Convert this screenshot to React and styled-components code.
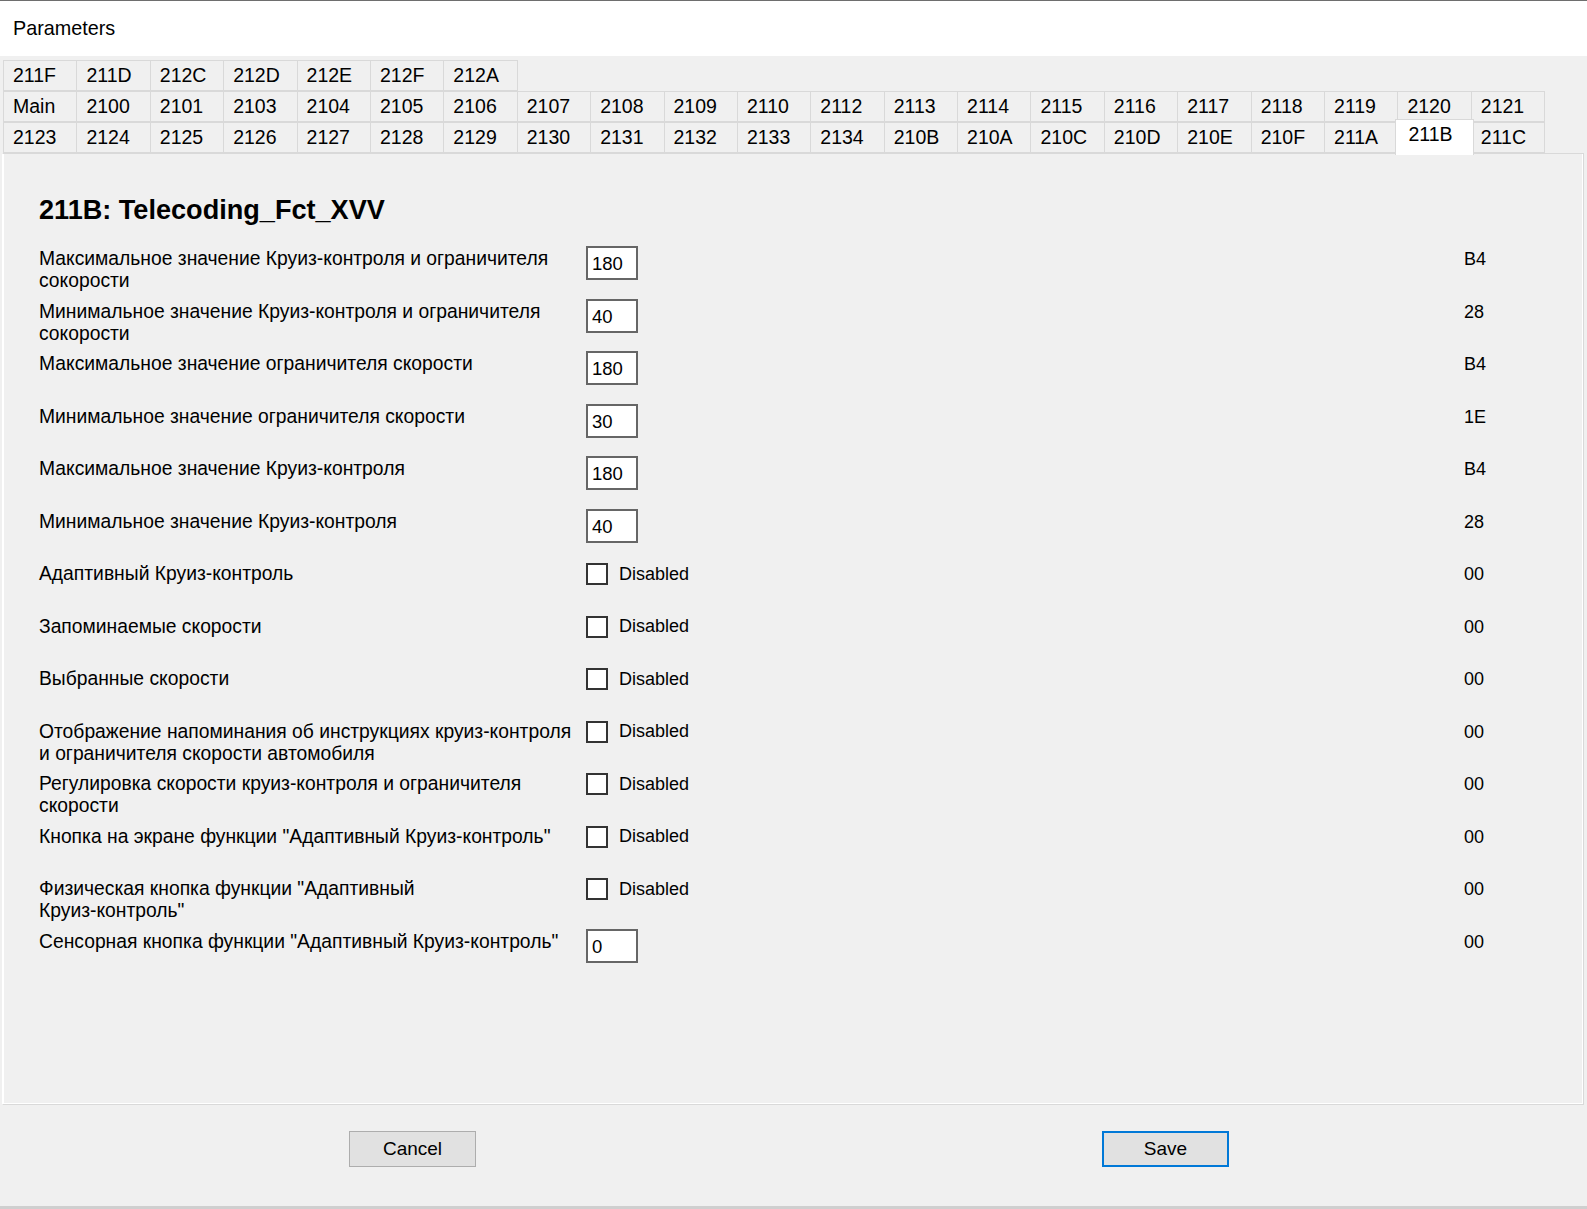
import React from "react";
import styled, { createGlobalStyle } from "styled-components";

const GlobalStyle = createGlobalStyle`
  html, body {
    margin: 0;
    padding: 0;
    background: #f0f0f0;
  }
  body {
    font-family: "Liberation Sans", Arial, sans-serif;
    color: #000;
  }
  * { box-sizing: border-box; }
`;

const Window = styled.div`
  width: 1587px;
  height: 1209px;
  display: flex;
  flex-direction: column;
  background: #f0f0f0;
  border-top: 1px solid #6e6e6e;
  border-bottom: 3px solid #cfcfcf;
`;

const Header = styled.header`
  height: 55px;
  flex: none;
  background: #fff;
  display: flex;
  align-items: center;
  padding-left: 13px;
  font-size: 19.8px;
`;

const TabStrip = styled.nav`
  flex: none;
  padding: 4px 0 0 3px;
  display: flex;
  flex-direction: column;
`;

const TabRow = styled.div`
  display: flex;
  height: 31px;
`;

const Tab = styled.div`
  flex: none;
  width: 74.4px;
  height: 31px;
  margin-right: -1px;
  margin-bottom: -1px;
  border: 1px solid #d9d9d9;
  background: #f0f0f0;
  display: flex;
  align-items: center;
  padding: 0 0 0 9px;
  font-size: 19.5px;
  white-space: nowrap;
  position: relative;

  ${(p) =>
    p.$active &&
    `
    z-index: 2;
    background: #fff;
    height: 36px;
    width: 78.4px;
    margin: -3px -3px -2px -2px;
    padding: 0 0 6px 12px;
    border-bottom: none;
  `}
`;

const Panel = styled.section`
  flex: 1;
  margin: 0 3px 0 2px;
  border: 1px solid #d9d9d9;
  border-left-color: #fff;
  box-shadow: inset 1px 0 #fff, inset -1px -1px #fff;
  padding: 41px 0 0 36px;
`;

const Title = styled.h1`
  margin: 0 0 23px;
  font-size: 27.1px;
  line-height: 30px;
  font-weight: bold;
`;

const ParamGrid = styled.div`
  display: grid;
  grid-template-columns: 547px 878px auto;
  grid-auto-rows: 52.5px;
`;

const Label = styled.div`
  font-size: 19.3px;
  line-height: 22.3px;
  white-space: nowrap;
`;

const Control = styled.div`
  display: flex;
  align-items: flex-start;
`;

const ValueBox = styled.div`
  width: 52px;
  height: 34px;
  margin-top: -2px;
  background: #fff;
  border: 2px solid #666;
  font-size: 18.5px;
  padding: 5px 0 0 4px;
  line-height: 22px;
`;

const CheckRow = styled.label`
  display: flex;
  align-items: center;
  height: 22px;
  gap: 11px;
  font-size: 18px;
`;

const Box = styled.span`
  width: 22px;
  height: 22px;
  background: #fff;
  border: 2px solid #333;
`;

const Hex = styled.div`
  font-size: 18px;
  line-height: 22.3px;
`;

const Footer = styled.footer`
  height: 101px;
  flex: none;
  display: flex;
  align-items: flex-start;
  padding: 26px 0 0 349px;
  gap: 626px;
`;

const Button = styled.button`
  width: 127px;
  height: 36px;
  background: #e1e1e1;
  border: ${(p) => (p.$primary ? "2px solid #0078d7" : "1px solid #adadad")};
  font-family: inherit;
  font-size: 19px;
  color: #000;
  padding: 0;
`;

const tabRows = [
  ["211F", "211D", "212C", "212D", "212E", "212F", "212A"],
  [
    "Main", "2100", "2101", "2103", "2104", "2105", "2106", "2107", "2108", "2109", "2110",
    "2112", "2113", "2114", "2115", "2116", "2117", "2118", "2119", "2120", "2121",
  ],
  [
    "2123", "2124", "2125", "2126", "2127", "2128", "2129", "2130", "2131", "2132", "2133",
    "2134", "210B", "210A", "210C", "210D", "210E", "210F", "211A", "211B", "211C",
  ],
];

const activeTab = "211B";

const params = [
  { label: ["Максимальное значение Круиз-контроля и ограничителя", "сокорости"], value: "180", hex: "B4" },
  { label: ["Минимальное значение Круиз-контроля и ограничителя", "сокорости"], value: "40", hex: "28" },
  { label: ["Максимальное значение ограничителя скорости"], value: "180", hex: "B4" },
  { label: ["Минимальное значение ограничителя скорости"], value: "30", hex: "1E" },
  { label: ["Максимальное значение Круиз-контроля"], value: "180", hex: "B4" },
  { label: ["Минимальное значение Круиз-контроля"], value: "40", hex: "28" },
  { label: ["Адаптивный Круиз-контроль"], check: true, hex: "00" },
  { label: ["Запоминаемые скорости"], check: true, hex: "00" },
  { label: ["Выбранные скорости"], check: true, hex: "00" },
  { label: ["Отображение напоминания об инструкциях круиз-контроля", "и ограничителя скорости автомобиля"], check: true, hex: "00" },
  { label: ["Регулировка скорости круиз-контроля и ограничителя", "скорости"], check: true, hex: "00" },
  { label: ["Кнопка на экране функции \"Адаптивный Круиз-контроль\""], check: true, hex: "00" },
  { label: ["Физическая кнопка функции \"Адаптивный", "Круиз-контроль\""], check: true, hex: "00" },
  { label: ["Сенсорная кнопка функции \"Адаптивный Круиз-контроль\""], value: "0", hex: "00" },
];

export default function App() {
  return (
    <>
      <GlobalStyle />
      <Window>
        <Header>Parameters</Header>
        <TabStrip>
          {tabRows.map((row, i) => (
            <TabRow key={i}>
              {row.map((t) => (
                <Tab key={t} $active={t === activeTab}>
                  {t}
                </Tab>
              ))}
            </TabRow>
          ))}
        </TabStrip>
        <Panel>
          <Title>211B: Telecoding_Fct_XVV</Title>
          <ParamGrid>
            {params.map((p, i) => (
              <React.Fragment key={i}>
                <Label>
                  {p.label.map((line, j) => (
                    <div key={j}>{line}</div>
                  ))}
                </Label>
                <Control>
                  {p.check ? (
                    <CheckRow>
                      <Box />
                      Disabled
                    </CheckRow>
                  ) : (
                    <ValueBox>{p.value}</ValueBox>
                  )}
                </Control>
                <Hex>{p.hex}</Hex>
              </React.Fragment>
            ))}
          </ParamGrid>
        </Panel>
        <Footer>
          <Button>Cancel</Button>
          <Button $primary>Save</Button>
        </Footer>
      </Window>
    </>
  );
}
